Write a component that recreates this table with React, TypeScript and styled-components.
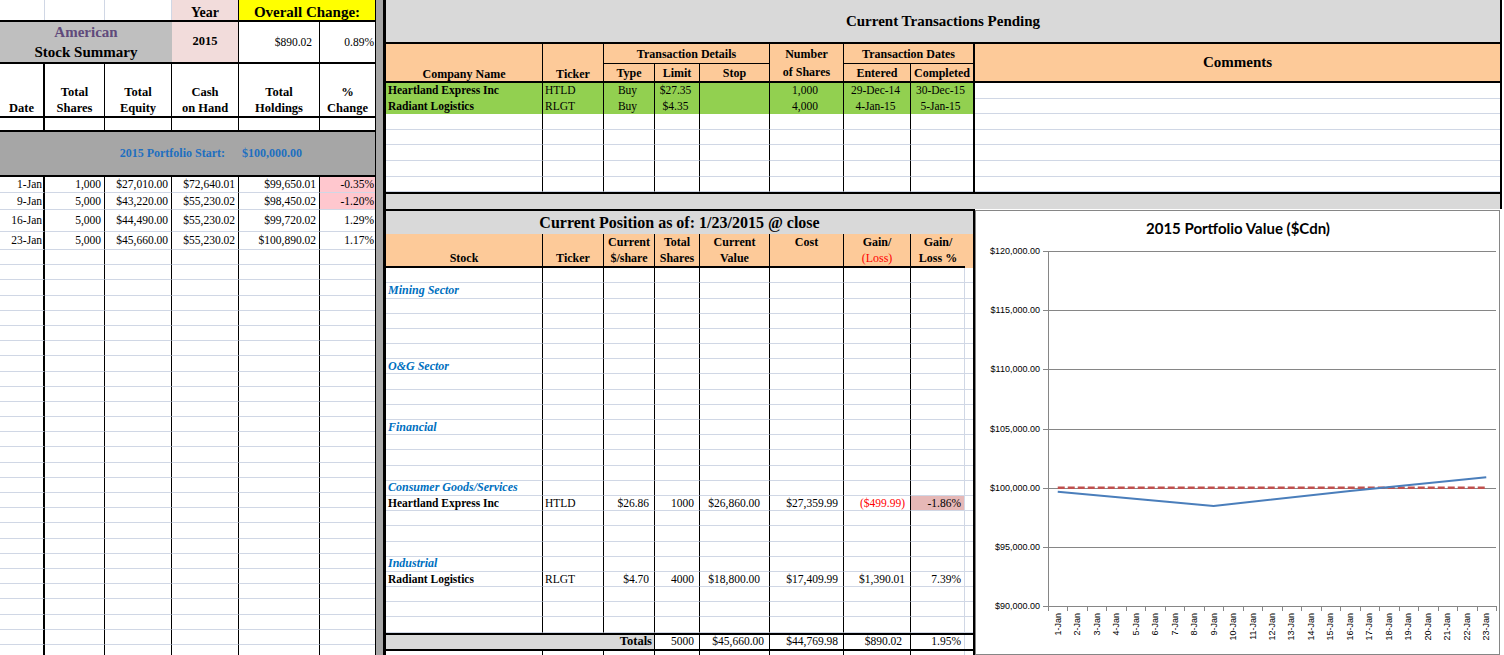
import styled, { createGlobalStyle } from "styled-components";

const GRID = "#d0d7e5";
const ORANGE = "#fdca99";
const GREEN = "#92d050";
const BAND = "#d9d9d9";
const DARK_BAND = "#a6a6a6";
const YEAR_PINK = "#f2dcdb";
const LOSS_PINK = "#ffc7ce";
const CELL_PINK = "#e6b8b7";

type Line = "thick" | "black" | "grid" | "none";
const rule = (l: Line = "none") =>
  l === "thick" ? "2px solid #000" : l === "black" ? "1px solid #000" : l === "grid" ? `1px solid ${GRID}` : "none";

const GlobalStyle = createGlobalStyle`
  html, body { margin: 0; padding: 0; background: #fff; }
  body {
    font-family: "Liberation Serif", "Times New Roman", serif;
    color: #000;
    overflow: hidden;
  }
`;

const Sheet = styled.div`
  display: flex;
  width: 1504px;
  height: 655px;
  overflow: hidden;
  background: #fff;
`;

/* ---------- generic spreadsheet cell ---------- */
const Cell = styled.div<{
  $right?: Line;
  $bottom?: Line;
  $align?: "left" | "center" | "right";
  $valign?: "center" | "bottom";
  $bg?: string;
  $span?: number;
  $bold?: boolean;
  $italic?: boolean;
  $size?: number;
  $color?: string;
  $pad?: number;
}>`
  box-sizing: border-box;
  display: flex;
  align-items: ${(p) => (p.$valign === "bottom" ? "flex-end" : "center")};
  justify-content: ${(p) => (p.$align === "right" ? "flex-end" : p.$align === "center" ? "center" : "flex-start")};
  padding: 0 ${(p) => p.$pad ?? 3}px 0 ${(p) => (p.$align === "left" || !p.$align ? 2 : 0)}px;
  min-width: 0;
  border-right: ${(p) => rule(p.$right)};
  border-bottom: ${(p) => rule(p.$bottom)};
  background: ${(p) => p.$bg ?? "transparent"};
  grid-column: ${(p) => (p.$span ? `span ${p.$span}` : "auto")};
  font-size: ${(p) => p.$size ?? 11.5}px;
  font-weight: ${(p) => (p.$bold ? 700 : 400)};
  font-style: ${(p) => (p.$italic ? "italic" : "normal")};
  color: ${(p) => p.$color ?? "#000"};
  white-space: nowrap;
  line-height: 1.1;
`;

/* ---------- left pane: stock summary ---------- */
const LeftPane = styled.div`
  flex: 0 0 375px;
  border-right: 1px solid #000;
  display: flex;
  flex-direction: column;
  overflow: hidden;
`;

const LeftRow = styled.div<{ $h: number; $rule?: boolean }>`
  flex: 0 0 auto;
  display: grid;
  grid-template-columns: 45px 60px 67px 67px 81px 55px;
  height: ${(p) => p.$h}px;
  border-bottom: ${(p) => (p.$rule ? "2px solid #000" : "none")};
`;

const SummaryTitle = styled(Cell)`
  flex-direction: column;
  justify-content: center;
  align-items: center;
  padding: 0;
  font-size: 15px;
  font-weight: 700;
  line-height: 20px;
  background: #bfbfbf;
`;

const Region = styled.span`
  color: #604a7b;
`;

const ColumnLabel = styled(Cell)`
  flex-direction: column;
  justify-content: flex-end;
  align-items: center;
  padding: 0;
  font-size: 12.5px;
  font-weight: 700;
  line-height: 16px;
`;

const StartBand = styled.div`
  flex: 0 0 auto;
  height: 43px;
  background: ${DARK_BAND};
  border-top: 2px solid #000;
  border-bottom: 2px solid #000;
  display: grid;
  grid-template-columns: 239px 136px;
  align-items: center;
  color: #1f6fc0;
  font-weight: 700;
  font-size: 12px;
`;

const StartLabel = styled.span`
  text-align: right;
  padding-right: 14px;
`;

const StartValue = styled.span`
  padding-left: 3px;
`;

const Splitter = styled.div`
  flex: 0 0 7px;
  background: ${DARK_BAND};
  border-right: 3px solid #000;
`;

/* ---------- right workspace ---------- */
const Workspace = styled.div`
  flex: 0 0 1116px;
  display: flex;
  flex-direction: column;
  overflow: hidden;
`;

const TitleBand = styled.div`
  flex: 0 0 auto;
  height: 42px;
  background: ${BAND};
  border-right: 2px solid #000;
  border-bottom: 2px solid #000;
  display: flex;
  align-items: center;
  justify-content: center;
  font-weight: 700;
  font-size: 15px;
`;

const TopSection = styled.div`
  flex: 0 0 auto;
  display: flex;
  border-bottom: 2px solid #000;
`;

const TX_COLS = "157px 61px 51px 45px 70px 74px 67px 62px";

const TxTable = styled.div`
  flex: 0 0 587px;
  border-right: 2px solid #000;
`;

const TxHead = styled.div`
  display: grid;
  grid-template-columns: ${TX_COLS};
  grid-template-rows: 20px 17px;
  background: ${ORANGE};
  border-bottom: 2px solid #000;
`;

const HeadCell = styled.div<{ $col: string; $row: string; $right?: boolean; $under?: boolean; $bottom?: boolean }>`
  grid-column: ${(p) => p.$col};
  grid-row: ${(p) => p.$row};
  box-sizing: border-box;
  display: flex;
  flex-direction: column;
  align-items: center;
  justify-content: ${(p) => (p.$bottom ? "flex-end" : "center")};
  border-right: ${(p) => (p.$right ? "1px solid #000" : "none")};
  border-bottom: ${(p) => (p.$under ? "1px solid #000" : "none")};
  font-weight: 700;
  font-size: 12px;
  line-height: ${(p) => (p.$bottom ? 13 : 18)}px;
  white-space: nowrap;
`;

const TxRow = styled.div<{ $green?: boolean }>`
  display: grid;
  grid-template-columns: ${TX_COLS};
  height: 15.6px;
  background: ${(p) => (p.$green ? GREEN : "#fff")};
`;

const CommentsPanel = styled.div`
  flex: 1 1 auto;
  border-right: 2px solid #000;
`;

const CommentsHead = styled.div`
  height: 37px;
  background: ${ORANGE};
  border-bottom: 2px solid #000;
  display: flex;
  align-items: center;
  justify-content: center;
  font-weight: 700;
  font-size: 15px;
`;

const CommentLine = styled.div`
  box-sizing: border-box;
  height: 15.6px;
  border-bottom: 1px solid ${GRID};
`;

const Separator = styled.div`
  flex: 0 0 auto;
  height: 15px;
  background: ${BAND};
  border-right: 2px solid #000;
`;

const BottomSection = styled.div`
  flex: 1 1 auto;
  min-height: 0;
  display: flex;
  overflow: hidden;
`;

const POS_COLS = "157px 61px 51px 45px 70px 74px 67px 54px 8px";

const PositionTable = styled.div`
  flex: 0 0 587px;
  border-top: 2px solid #000;
  border-right: 2px solid #000;
`;

const PositionTitle = styled.div`
  height: 23px;
  background: ${BAND};
  display: flex;
  align-items: center;
  justify-content: center;
  font-weight: 700;
  font-size: 16px;
`;

const PosHead = styled.div`
  display: grid;
  grid-template-columns: ${POS_COLS};
  height: 34px;
  background: ${ORANGE};
`;

const PosHeadCell = styled.div<{ $right?: boolean; $filler?: boolean }>`
  box-sizing: border-box;
  display: flex;
  flex-direction: column;
  align-items: center;
  justify-content: flex-end;
  border-right: ${(p) => (p.$right ? "1px solid #000" : "none")};
  border-bottom: ${(p) => (p.$filler ? "none" : "2px solid #000")};
  font-weight: 700;
  font-size: 12px;
  line-height: 16px;
  white-space: nowrap;
`;

const LossWord = styled.span`
  color: #ff0000;
  font-weight: 400;
`;

const PosRow = styled.div<{ $h?: number }>`
  display: grid;
  grid-template-columns: ${POS_COLS};
  height: ${(p) => p.$h ?? 15.2}px;
`;

const TotalsRow = styled(PosRow)`
  border-top: 2px solid #000;
  border-bottom: 2px solid #000;
`;

const ChartBox = styled.div`
  flex: 0 0 auto;
  width: 523px;
  margin: 1px 2px 0 0;
  border: 1px solid #868686;
  background: #fff;
`;

const ChartSvg = styled.svg`
  display: block;
  font-family: "Liberation Sans", Arial, sans-serif;
`;

/* ---------- data ---------- */
const leftLines: Line[] = ["thick", "black", "black", "black", "black", "none"];

const history = [
  { date: "1-Jan", shares: "1,000", equity: "$27,010.00", cash: "$72,640.01", total: "$99,650.01", pct: "-0.35%", neg: true, h: 16 },
  { date: "9-Jan", shares: "5,000", equity: "$43,220.00", cash: "$55,230.02", total: "$98,450.02", pct: "-1.20%", neg: true, h: 17 },
  { date: "16-Jan", shares: "5,000", equity: "$44,490.00", cash: "$55,230.02", total: "$99,720.02", pct: "1.29%", neg: false, h: 22 },
  { date: "23-Jan", shares: "5,000", equity: "$45,660.00", cash: "$55,230.02", total: "$100,890.02", pct: "1.17%", neg: false, h: 18 },
];

const summaryHeads = [
  ["", "Date"],
  ["Total", "Shares"],
  ["Total", "Equity"],
  ["Cash", "on Hand"],
  ["Total", "Holdings"],
  ["%", "Change"],
];

const txLines: Line[] = ["black", "black", "black", "black", "black", "black", "black", "none"];
const txAlign: ("left" | "center")[] = ["left", "left", "center", "center", "center", "center", "center", "center"];

const pending = [
  ["Heartland Express Inc", "HTLD", "Buy", "$27.35", "", "1,000", "29-Dec-14", "30-Dec-15"],
  ["Radiant Logistics", "RLGT", "Buy", "$4.35", "", "4,000", "4-Jan-15", "5-Jan-15"],
];

const posLines: Line[] = ["black", "black", "black", "black", "black", "black", "black", "grid", "none"];

const positionHeads = [
  ["", "Stock"],
  ["", "Ticker"],
  ["Current", "$/share"],
  ["Total", "Shares"],
  ["Current", "Value"],
  ["Cost", "\u00a0"],
  ["Gain/", "(Loss)"],
  ["Gain/", "Loss %"],
];

type Holding = { name: string; ticker: string; price: string; shares: string; value: string; cost: string; gain: string; pct: string; loss?: boolean };

const sectors: Record<number, string> = {
  1: "Mining Sector",
  6: "O&G Sector",
  10: "Financial",
  14: "Consumer Goods/Services",
  19: "Industrial",
};

const holdings: Record<number, Holding> = {
  15: { name: "Heartland Express Inc", ticker: "HTLD", price: "$26.86", shares: "1000", value: "$26,860.00", cost: "$27,359.99", gain: "($499.99)", pct: "-1.86%", loss: true },
  20: { name: "Radiant Logistics", ticker: "RLGT", price: "$4.70", shares: "4000", value: "$18,800.00", cost: "$17,409.99", gain: "$1,390.01", pct: "7.39%" },
};

/* ---------- chart ---------- */
function PortfolioChart() {
  const X0 = 72;
  const X1 = 520;
  const Y0 = 40;
  const Y1 = 395;
  const cw = (X1 - X0) / 23;
  const yOf = (v: number) => Y1 - ((v - 90000) / 30000) * (Y1 - Y0);
  const xOf = (i: number) => X0 + (i + 0.5) * cw;
  const levels = [120000, 115000, 110000, 105000, 100000, 95000, 90000];
  const values: [number, number][] = [
    [0, 99650.01],
    [8, 98450.02],
    [15, 99720.02],
    [22, 100890.02],
  ];
  const crisp = (n: number) => Math.round(n) + 0.5;

  return (
    <ChartSvg width={523} height={450}>
      <text x={262} y={23} textAnchor="middle" fontFamily="Lato, 'Open Sans', sans-serif" fontWeight={700} fontSize={15}>
        2015 Portfolio Value ($Cdn)
      </text>
      {levels.map((v) => (
        <g key={v}>
          <line x1={X0 - 5} x2={X1} y1={crisp(yOf(v))} y2={crisp(yOf(v))} stroke="#868686" />
          <text x={X0 - 8} y={yOf(v) + 3} textAnchor="end" fontSize={9}>
            {"$" + v.toLocaleString("en-US") + ".00"}
          </text>
        </g>
      ))}
      <line x1={crisp(X0)} x2={crisp(X0)} y1={Y0} y2={Y1 + 1} stroke="#868686" />
      {Array.from({ length: 24 }, (_, i) => (
        <line key={i} x1={crisp(X0 + i * cw)} x2={crisp(X0 + i * cw)} y1={Y1} y2={Y1 + 5} stroke="#868686" />
      ))}
      {Array.from({ length: 23 }, (_, i) => (
        <text key={i} transform={`translate(${xOf(i) + 3}, ${Y1 + 7}) rotate(-90)`} textAnchor="end" fontSize={9}>
          {`${i + 1}-Jan`}
        </text>
      ))}
      <line
        x1={xOf(0)}
        x2={xOf(22)}
        y1={yOf(100000)}
        y2={yOf(100000)}
        stroke="#c0504d"
        strokeWidth={2.5}
        strokeDasharray="7 3"
      />
      <polyline
        points={values.map(([i, v]) => `${xOf(i)},${yOf(v)}`).join(" ")}
        fill="none"
        stroke="#4a7ebb"
        strokeWidth={2}
        strokeLinejoin="round"
      />
    </ChartSvg>
  );
}

/* ---------- page ---------- */
export default function App() {
  return (
    <>
      <GlobalStyle />
      <Sheet>
        <LeftPane>
          <LeftRow $h={20} $rule>
            <Cell $right="grid" />
            <Cell $right="grid" />
            <Cell $right="grid" />
            <Cell $right="black" $bg={YEAR_PINK} $align="center" $valign="bottom" $bold $size={14} $pad={0}>
              Year
            </Cell>
            <Cell $span={2} $bg="#ffff00" $align="center" $valign="bottom" $bold $size={15} $pad={0}>
              Overall Change:
            </Cell>
          </LeftRow>
          <LeftRow $h={40} $rule>
            <SummaryTitle $span={3}>
              <Region>American</Region>
              <span>Stock Summary</span>
            </SummaryTitle>
            <Cell $right="black" $bg={YEAR_PINK} $align="center" $bold $size={12.5} $pad={0}>
              2015
            </Cell>
            <Cell $right="black" $align="right" $pad={7}>
              $890.02
            </Cell>
            <Cell $align="right" $pad={1}>
              0.89%
            </Cell>
          </LeftRow>
          <LeftRow $h={52} $rule>
            {summaryHeads.map(([a, b], i) => (
              <ColumnLabel key={i} $right={leftLines[i]}>
                <span>{a || "\u00a0"}</span>
                <span>{b}</span>
              </ColumnLabel>
            ))}
          </LeftRow>
          <LeftRow $h={12}>
            {leftLines.map((l, i) => (
              <Cell key={i} $right={l} />
            ))}
          </LeftRow>
          <StartBand>
            <StartLabel>2015 Portfolio Start:</StartLabel>
            <StartValue>$100,000.00</StartValue>
          </StartBand>
          {history.map((r) => (
            <LeftRow key={r.date} $h={r.h}>
              <Cell $right="thick" $bottom="grid" $align="right" $pad={1}>
                {r.date}
              </Cell>
              <Cell $right="black" $bottom="grid" $align="right">
                {r.shares}
              </Cell>
              <Cell $right="black" $bottom="grid" $align="right">
                {r.equity}
              </Cell>
              <Cell $right="black" $bottom="grid" $align="right">
                {r.cash}
              </Cell>
              <Cell $right="black" $bottom="grid" $align="right">
                {r.total}
              </Cell>
              <Cell $bottom="grid" $align="right" $pad={1} $bg={r.neg ? LOSS_PINK : undefined}>
                {r.pct}
              </Cell>
            </LeftRow>
          ))}
          {Array.from({ length: 28 }, (_, row) => (
            <LeftRow key={row} $h={15.2}>
              {leftLines.map((l, i) => (
                <Cell key={i} $right={l} $bottom="grid" />
              ))}
            </LeftRow>
          ))}
        </LeftPane>

        <Splitter />

        <Workspace>
          <TitleBand>Current Transactions Pending</TitleBand>
          <TopSection>
            <TxTable>
              <TxHead>
                <HeadCell $col="1" $row="1 / 3" $right $bottom>
                  Company Name
                </HeadCell>
                <HeadCell $col="2" $row="1 / 3" $right $bottom>
                  Ticker
                </HeadCell>
                <HeadCell $col="3 / 6" $row="1" $right $under>
                  Transaction Details
                </HeadCell>
                <HeadCell $col="3" $row="2" $right>
                  Type
                </HeadCell>
                <HeadCell $col="4" $row="2" $right>
                  Limit
                </HeadCell>
                <HeadCell $col="5" $row="2" $right>
                  Stop
                </HeadCell>
                <HeadCell $col="6" $row="1 / 3" $right>
                  <span>Number</span>
                  <span>of Shares</span>
                </HeadCell>
                <HeadCell $col="7 / 9" $row="1" $under>
                  Transaction Dates
                </HeadCell>
                <HeadCell $col="7" $row="2" $right>
                  Entered
                </HeadCell>
                <HeadCell $col="8" $row="2">
                  Completed
                </HeadCell>
              </TxHead>
              {pending.map((row) => (
                <TxRow key={row[1]} $green>
                  {row.map((v, i) => (
                    <Cell key={i} $right={txLines[i]} $align={txAlign[i]} $bold={i === 0} $size={11.5}>
                      {v}
                    </Cell>
                  ))}
                </TxRow>
              ))}
              {Array.from({ length: 5 }, (_, r) => (
                <TxRow key={r}>
                  {txLines.map((l, i) => (
                    <Cell key={i} $right={l} $bottom="grid" />
                  ))}
                </TxRow>
              ))}
            </TxTable>
            <CommentsPanel>
              <CommentsHead>Comments</CommentsHead>
              {Array.from({ length: 7 }, (_, r) => (
                <CommentLine key={r} />
              ))}
            </CommentsPanel>
          </TopSection>
          <Separator />
          <BottomSection>
            <PositionTable>
              <PositionTitle>Current Position as of: 1/23/2015 @ close</PositionTitle>
              <PosHead>
                {positionHeads.map(([a, b], i) => (
                  <PosHeadCell key={i} $right={i < 7}>
                    <span>{a || "\u00a0"}</span>
                    {i === 6 ? <LossWord>{b}</LossWord> : <span>{b}</span>}
                  </PosHeadCell>
                ))}
                <PosHeadCell $filler />
              </PosHead>
              {Array.from({ length: 24 }, (_, r) => {
                const sector = sectors[r];
                const h = holdings[r];
                if (h) {
                  const vals = [h.name, h.ticker, h.price, h.shares, h.value, h.cost, h.gain, h.pct];
                  return (
                    <PosRow key={r}>
                      {vals.map((v, i) => (
                        <Cell
                          key={i}
                          $right={posLines[i]}
                          $bottom="grid"
                          $align={i < 2 ? "left" : "right"}
                          $bold={i === 0}
                          $pad={i === 4 ? 9 : i === 7 ? 3 : 5}
                          $color={i === 6 && h.loss ? "#ff0000" : undefined}
                          $bg={i === 7 && h.loss ? CELL_PINK : undefined}
                        >
                          {v}
                        </Cell>
                      ))}
                      <Cell $bottom="grid" />
                    </PosRow>
                  );
                }
                return (
                  <PosRow key={r}>
                    {posLines.map((l, i) => (
                      <Cell key={i} $right={l} $bottom="grid" $italic={i === 0 && !!sector} $bold={i === 0 && !!sector} $size={i === 0 && sector ? 12 : 11.5} $color={i === 0 && sector ? "#0070c0" : undefined}>
                        {i === 0 ? sector : null}
                      </Cell>
                    ))}
                  </PosRow>
                );
              })}
              <TotalsRow $h={14}>
                <Cell $span={3} $right="black" $bg={BAND} $align="right" $bold $size={12.5} $pad={2}>
                  Totals
                </Cell>
                <Cell $right="black" $align="right" $pad={5}>
                  5000
                </Cell>
                <Cell $right="black" $align="right" $pad={5}>
                  $45,660.00
                </Cell>
                <Cell $right="black" $align="right" $pad={5}>
                  $44,769.98
                </Cell>
                <Cell $right="black" $align="right" $pad={8}>
                  $890.02
                </Cell>
                <Cell $right="grid" $align="right" $pad={3}>
                  1.95%
                </Cell>
                <Cell />
              </TotalsRow>
              <PosRow>
                {posLines.map((l, i) => (
                  <Cell key={i} $right={l} $bottom="grid" />
                ))}
              </PosRow>
            </PositionTable>
            <ChartBox>
              <PortfolioChart />
            </ChartBox>
          </BottomSection>
        </Workspace>
      </Sheet>
    </>
  );
}
